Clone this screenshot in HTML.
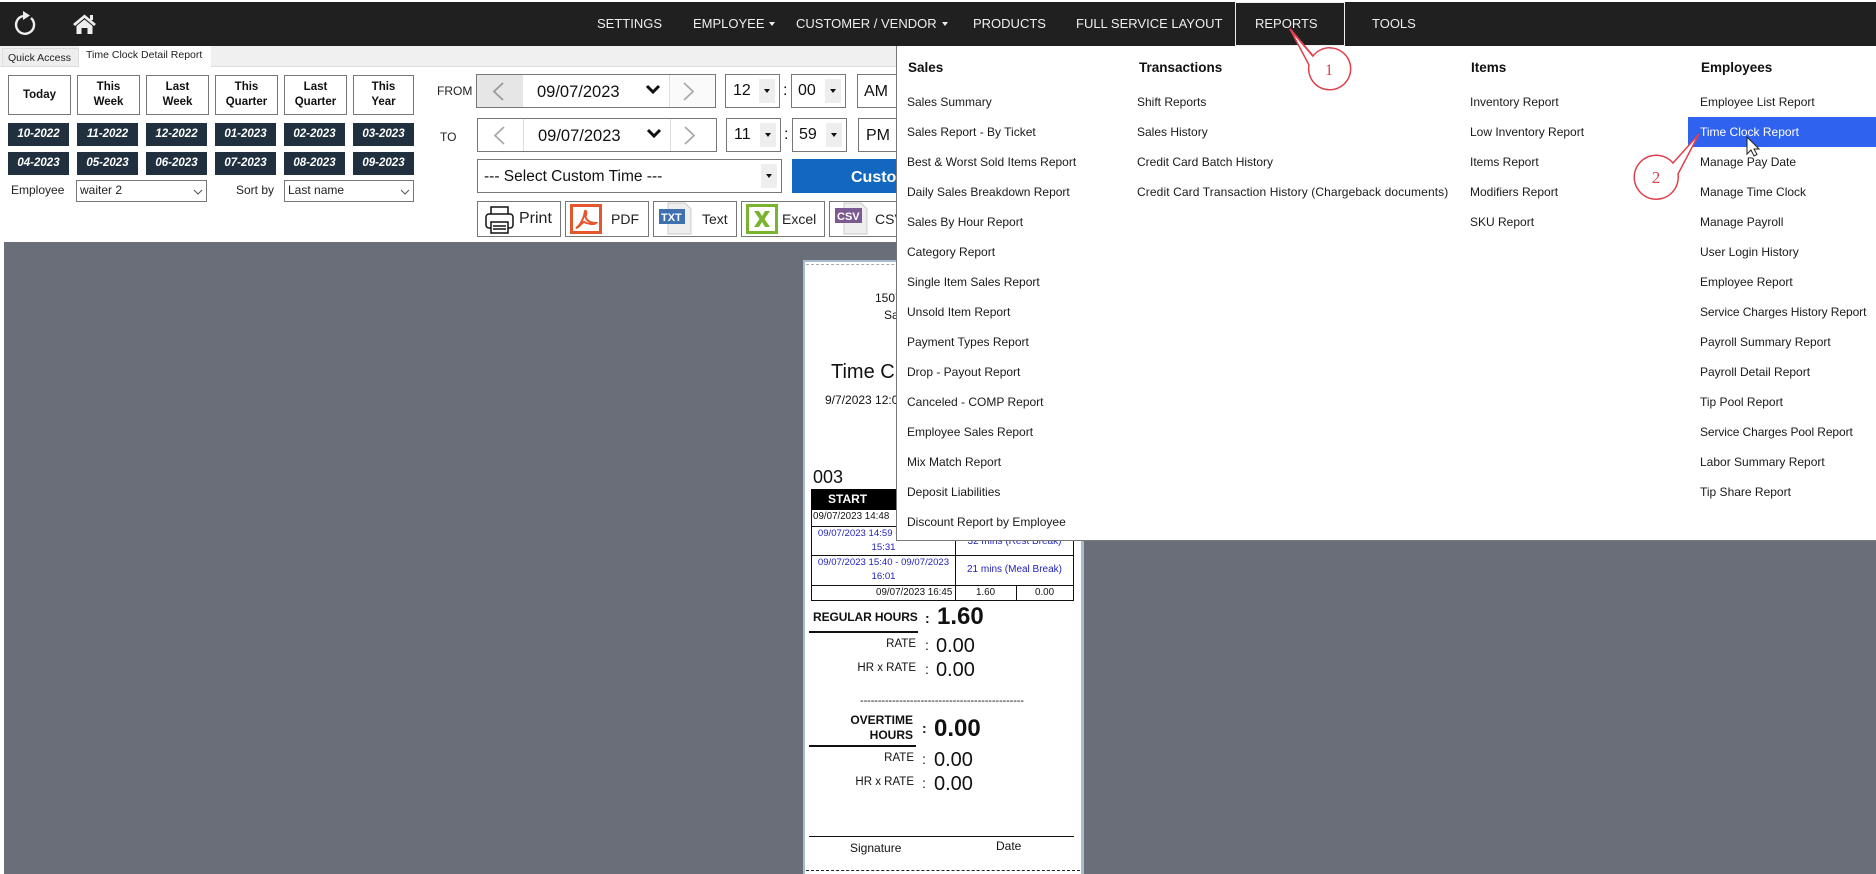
<!DOCTYPE html>
<html><head><meta charset="utf-8"><style>
html,body{margin:0;padding:0;width:1876px;height:874px;overflow:hidden;background:#fff;font-family:"Liberation Sans",sans-serif;color:#111}
div,span{position:absolute;white-space:nowrap;box-sizing:border-box}
.n{color:#eee;font-size:13px;top:16px}
.b{border:1px solid #777;background:#fff;top:75px;width:63px;height:40px;font-weight:bold;font-size:11.5px;text-align:center;line-height:15px;padding-top:4px;color:#111}
.m{background:#20303f;color:#fff;font:italic bold 11.5px/23px "Liberation Sans",sans-serif;width:61px;height:23px;text-align:center}
.box{border:1px solid #777;background:#fff}
.t{font-size:16px;color:#111}
.d{font-size:16.500px;color:#111}
.ar{background:#eee;width:16px;height:24px}
.ar:after{content:"";position:absolute;left:5px;top:10px;border:3px solid transparent;border-top:4px solid #111}
.a{border:1px solid #777;background:#fff;top:201px;height:36px}
.h{font-weight:bold;font-size:13.5px;top:60px;color:#111}
.i{font-size:12px;color:#1a1a1a;line-height:16px}
.r{font-size:12px;color:#111}
.l{font-size:11.500px;color:#111;text-align:right}
.blue{color:#2222bb;font-size:9.600px;text-align:center;line-height:14px}
.tb{font-size:9.800px;color:#111}
</style></head><body>
<div style="left:0;top:2px;width:1876px;height:44px;background:#202020"></div>
<svg style="position:absolute;left:0;top:0" width="110" height="46" viewBox="0 0 110 46"><path d="M31 18A9 9 0 1 1 23 16" fill="none" stroke="#eee" stroke-width="2.400"/><path d="M23 11L30 15.500L23 20Z" fill="#eee"/><path d="M73 24L84.500 14.500L96 24L94 26L84.500 18L75 26Z" fill="#eee"/><path d="M76.500 26L84.500 19.500L92.500 26V34H87.500V28H81.500V34H76.500Z" fill="#eee"/><rect x="90" y="15" width="3" height="5" fill="#eee"/></svg>
<div class="n" style="left:597px">SETTINGS</div>
<div class="n" style="left:693px">EMPLOYEE</div><div style="left:769px;top:22px;border:3px solid transparent;border-top:4px solid #eee"></div>
<div class="n" style="left:796px">CUSTOMER / VENDOR</div><div style="left:942px;top:22px;border:3px solid transparent;border-top:4px solid #eee"></div>
<div class="n" style="left:973px">PRODUCTS</div>
<div class="n" style="left:1076px">FULL SERVICE LAYOUT</div>
<div style="left:1235px;top:2px;width:110px;height:44px;border:1px solid #eee"></div>
<div class="n" style="left:1255px">REPORTS</div>
<div class="n" style="left:1372px">TOOLS</div>

<div style="left:0;top:46px;width:1876px;height:21px;background:#f0f0f0;border-bottom:1px solid #ddd"></div>
<div style="left:2px;top:48px;width:77px;height:19px;background:#eee;border:1px solid #ddd;font-size:10.500px;line-height:19px;padding-left:5px;color:#222">Quick Access</div>
<div style="left:79px;top:46px;width:132px;height:21px;background:#fff;font-size:10.500px;line-height:19px;padding-left:7px;color:#222">Time Clock Detail Report</div>

<div class="b" style="left:8px;padding-top:12px">Today</div>
<div class="b" style="left:77px">This<br>Week</div>
<div class="b" style="left:146px">Last<br>Week</div>
<div class="b" style="left:215px">This<br>Quarter</div>
<div class="b" style="left:284px">Last<br>Quarter</div>
<div class="b" style="left:353px;width:61px">This<br>Year</div>
<div class="m" style="left:8px;top:123px">10-2022</div><div class="m" style="left:77px;top:123px">11-2022</div><div class="m" style="left:146px;top:123px">12-2022</div><div class="m" style="left:215px;top:123px">01-2023</div><div class="m" style="left:284px;top:123px">02-2023</div><div class="m" style="left:353px;top:123px">03-2023</div>
<div class="m" style="left:8px;top:152px">04-2023</div><div class="m" style="left:77px;top:152px">05-2023</div><div class="m" style="left:146px;top:152px">06-2023</div><div class="m" style="left:215px;top:152px">07-2023</div><div class="m" style="left:284px;top:152px">08-2023</div><div class="m" style="left:353px;top:152px">09-2023</div>
<div style="left:11px;top:183px;font-size:12px;color:#222">Employee</div>
<div class="box" style="left:76px;top:180px;width:131px;height:22px;font-size:12px;padding:2px 3px;color:#222">waiter 2</div>
<div style="left:236px;top:183px;font-size:12px;color:#222">Sort by</div>
<div class="box" style="left:284px;top:180px;width:130px;height:22px;font-size:12px;padding:2px 3px;color:#222">Last name</div>
<svg style="position:absolute;left:190px;top:187px" width="225" height="10"><path d="M4 3L8 7L12 3M211 3L215 7L219 3" fill="none" stroke="#555"/></svg>

<div style="left:437px;top:84px;font-size:12px;color:#222">FROM</div>
<div style="left:440px;top:130px;font-size:12px;color:#222">TO</div>
<div class="box" style="left:476px;top:74px;width:240px;height:34px"></div>
<div style="left:477px;top:75px;width:46px;height:32px;background:#e6e6e6"></div>
<div style="left:669px;top:75px;width:46px;height:32px;border-left:1px solid #ddd;background:#fafafa"></div>
<div class="box" style="left:477px;top:118px;width:240px;height:34px"></div>
<div style="left:523px;top:119px;width:1px;height:32px;background:#ddd"></div>
<div style="left:670px;top:119px;width:1px;height:32px;background:#ddd"></div>
<div class="d" style="left:537px;top:83px">09/07/2023</div>
<div class="d" style="left:538px;top:127px">09/07/2023</div>
<svg style="position:absolute;left:480px;top:70px" width="300" height="90"><g fill="none" stroke="#999" stroke-width="1.800"><path d="M23 13L14 21.500L23 30"/><path d="M24 57L15 65.500L24 74" stroke="#aaa"/><path d="M204 13L213 21.500L204 30" stroke="#aaa"/><path d="M205 57L214 65.500L205 74" stroke="#aaa"/></g><g fill="none" stroke="#111" stroke-width="3"><path d="M167 16L173 22L179 16"/><path d="M168 60L174 66L180 60"/></g></svg>

<div class="box" style="left:725px;top:74px;width:55px;height:34px"></div><div class="t" style="left:733px;top:82px">12</div><div class="ar" style="left:759px;top:79px"></div>
<div style="left:783px;top:82px;font-size:16px">:</div>
<div class="box" style="left:791px;top:74px;width:55px;height:34px"></div><div class="t" style="left:798px;top:82px">00</div><div class="ar" style="left:825px;top:79px"></div>
<div class="box" style="left:857px;top:74px;width:60px;height:34px"></div><div class="t" style="left:864px;top:83px">AM</div>
<div class="box" style="left:726px;top:118px;width:55px;height:34px"></div><div class="t" style="left:734px;top:126px">11</div><div class="ar" style="left:760px;top:123px"></div>
<div style="left:784px;top:126px;font-size:16px">:</div>
<div class="box" style="left:792px;top:118px;width:55px;height:34px"></div><div class="t" style="left:799px;top:126px">59</div><div class="ar" style="left:826px;top:123px"></div>
<div class="box" style="left:858px;top:118px;width:60px;height:34px"></div><div class="t" style="left:866px;top:127px">PM</div>
<div class="box" style="left:477px;top:159px;width:305px;height:34px"></div>
<div style="left:484px;top:168px;font-size:15.500px;color:#111">--- Select Custom Time ---</div>
<div class="ar" style="left:761px;top:164px"></div>
<div style="left:792px;top:159px;width:120px;height:34px;background:#1268bf;color:#fff;font-weight:bold;font-size:16px;line-height:37px;padding-left:59px">Custom</div>

<div class="a" style="left:477px;width:84px"></div><div style="left:519px;top:210px;font-size:16px;color:#222">Print</div>
<svg style="position:absolute;left:484px;top:205px" width="32" height="30"><g fill="none" stroke="#111" stroke-width="1.500"><path d="M7 9V2H24V9"/><rect x="2" y="9" width="27" height="14" rx="3"/><rect x="7" y="17" width="17" height="11" fill="#fff"/><path d="M9 21H22M9 24H22"/></g></svg>
<div class="a" style="left:565px;width:84px"></div><div style="left:611px;top:211px;font-size:14px;color:#222">PDF</div>
<svg style="position:absolute;left:570px;top:204px" width="33" height="31"><rect x="1.500" y="1.500" width="29" height="27" fill="#fff" stroke="#e4572e" stroke-width="3"/><path d="M6 24C10 22 14 14 15 7C16 6 17 8 15.500 13C17 17 20 19 26 19C24 21 18 20 14 18C11 19 9 24 6 24Z" fill="none" stroke="#e4572e" stroke-width="2"/></svg>
<div class="a" style="left:653px;width:84px"></div><div style="left:702px;top:211px;font-size:14px;color:#222">Text</div>
<svg style="position:absolute;left:658px;top:202px" width="38" height="33"><path d="M10 1H27L33 7V32H10Z" fill="#eee" stroke="#ccc"/><rect x="1" y="7" width="26" height="15" fill="#3f70b0"/><text x="3" y="19" font-family="Liberation Sans" font-weight="bold" font-size="11" fill="#fff">TXT</text></svg>
<div class="a" style="left:741px;width:84px"></div><div style="left:782px;top:211px;font-size:14px;color:#222">Excel</div>
<svg style="position:absolute;left:746px;top:204px" width="34" height="31"><rect x="1.500" y="1.500" width="29" height="27" fill="#fff" stroke="#7ab32e" stroke-width="3"/><path d="M8 7H13L16 12L19 7H24L18.500 15L24 23H19L16 18L13 23H8L13.500 15Z" fill="#7ab32e"/></svg>
<div class="a" style="left:829px;width:84px"></div><div style="left:875px;top:211px;font-size:14px;color:#222">CSV</div>
<svg style="position:absolute;left:834px;top:202px" width="38" height="33"><path d="M10 1H27L33 7V32H10Z" fill="#eee" stroke="#ccc"/><rect x="1" y="6" width="27" height="15" fill="#7b5a92"/><text x="3" y="18" font-family="Liberation Sans" font-weight="bold" font-size="11" fill="#fff">CSV</text></svg>

<div style="left:4px;top:242px;width:1872px;height:632px;background:#696e79"></div>
<div style="left:803px;top:260px;width:281px;height:614px;background:#fff;border-left:2px solid #a9bccd;border-right:3px solid #a9bccd;border-top:2px solid #a9bccd"></div>
<div style="left:806px;top:264px;width:274px;border-top:1px dashed #aaa"></div>
<div style="left:806px;top:870px;width:274px;border-top:1px dashed #222"></div>
<div class="r" style="left:875px;top:291px">1507</div>
<div class="r" style="left:884px;top:308px">Sa</div>
<div style="left:831px;top:361px;font-size:20px;color:#111">Time Cl</div>
<div class="r" style="left:825px;top:393px">9/7/2023 12:00</div>
<div style="left:813px;top:467px;font-size:18px;color:#111">003</div>
<div style="left:811px;top:489px;width:262px;height:21px;background:#000;color:#fff;font-weight:bold;font-size:12px;line-height:20px;padding-left:17px">START</div>
<div style="left:811px;top:510px;width:263px;height:91px;border:1px solid #111;border-top:none"></div>
<div style="left:811px;top:526px;width:263px;height:1px;background:#111"></div>
<div style="left:811px;top:555px;width:263px;height:1px;background:#111"></div>
<div style="left:811px;top:585px;width:263px;height:1px;background:#111"></div>
<div style="left:955px;top:526px;width:1px;height:75px;background:#111"></div>
<div style="left:1016px;top:585px;width:1px;height:16px;background:#111"></div>
<div class="tb" style="left:813px;top:511px">09/07/2023 14:48</div>
<div class="blue" style="left:812px;top:527px;width:143px">09/07/2023 14:59 - 09/07/2023<br>15:31</div>
<div class="blue" style="left:956px;top:535px;width:117px;font-size:10px">32 mins (Rest Break)</div>
<div class="blue" style="left:812px;top:556px;width:143px">09/07/2023 15:40 - 09/07/2023<br>16:01</div>
<div class="blue" style="left:956px;top:563px;width:117px;font-size:10px">21 mins (Meal Break)</div>
<div class="tb" style="left:876px;top:587px">09/07/2023 16:45</div>
<div class="tb" style="left:976px;top:587px">1.60</div>
<div class="tb" style="left:1035px;top:587px">0.00</div>

<div style="left:813px;top:610px;font-size:12px;font-weight:bold;letter-spacing:-.1px">REGULAR HOURS</div>
<div style="left:925px;top:610px;font-size:14px;font-weight:bold">:</div>
<div style="left:937px;top:603px;font-size:24px;font-weight:bold">1.60</div>
<div style="left:809px;top:631px;width:109px;height:2px;background:#111"></div>
<div class="l" style="left:850px;width:66px;top:638px">RATE</div><div style="left:925px;top:637px;font-size:14px">:</div><div style="left:936px;top:635px;font-size:20px">0.00</div>
<div class="l" style="left:850px;width:66px;top:662px">HR x RATE</div><div style="left:925px;top:661px;font-size:14px">:</div><div style="left:936px;top:659px;font-size:20px">0.00</div>
<div style="left:860px;top:695px;font-size:11px;letter-spacing:-.1px">----------------------------------------------</div>
<div style="left:850px;top:713px;font-size:12px;font-weight:bold;text-align:right;width:63px;line-height:15px">OVERTIME<br>HOURS</div>
<div style="left:922px;top:720px;font-size:14px;font-weight:bold">:</div>
<div style="left:934px;top:715px;font-size:24px;font-weight:bold">0.00</div>
<div style="left:809px;top:745px;width:107px;height:2px;background:#111"></div>
<div class="l" style="left:848px;width:66px;top:752px">RATE</div><div style="left:922px;top:751px;font-size:14px">:</div><div style="left:934px;top:749px;font-size:20px">0.00</div>
<div class="l" style="left:848px;width:66px;top:776px">HR x RATE</div><div style="left:922px;top:775px;font-size:14px">:</div><div style="left:934px;top:773px;font-size:20px">0.00</div>
<div style="left:809px;top:836px;width:265px;height:1px;background:#111"></div>
<div class="r" style="left:850px;top:841px">Signature</div>
<div class="r" style="left:996px;top:839px">Date</div>

<div style="left:896px;top:46px;width:980px;height:495px;background:#fff;border-left:1px solid #777;border-bottom:1px solid #777"></div>
<div class="h" style="left:908px">Sales</div><div class="h" style="left:1139px">Transactions</div><div class="h" style="left:1471px">Items</div><div class="h" style="left:1701px">Employees</div>
<div style="left:1688px;top:117px;width:188px;height:30px;background:#2f62ee"></div>

<div class="i" style="left:907px;top:94px">Sales Summary</div>
<div class="i" style="left:907px;top:124px">Sales Report - By Ticket</div>
<div class="i" style="left:907px;top:154px">Best &amp; Worst Sold Items Report</div>
<div class="i" style="left:907px;top:184px">Daily Sales Breakdown Report</div>
<div class="i" style="left:907px;top:214px">Sales By Hour Report</div>
<div class="i" style="left:907px;top:244px">Category Report</div>
<div class="i" style="left:907px;top:274px">Single Item Sales Report</div>
<div class="i" style="left:907px;top:304px">Unsold Item Report</div>
<div class="i" style="left:907px;top:334px">Payment Types Report</div>
<div class="i" style="left:907px;top:364px">Drop - Payout Report</div>
<div class="i" style="left:907px;top:394px">Canceled - COMP Report</div>
<div class="i" style="left:907px;top:424px">Employee Sales Report</div>
<div class="i" style="left:907px;top:454px">Mix Match Report</div>
<div class="i" style="left:907px;top:484px">Deposit Liabilities</div>
<div class="i" style="left:907px;top:514px">Discount Report by Employee</div>

<div class="i" style="left:1137px;top:94px">Shift Reports</div>
<div class="i" style="left:1137px;top:124px">Sales History</div>
<div class="i" style="left:1137px;top:154px">Credit Card Batch History</div>
<div class="i" style="left:1137px;top:184px;letter-spacing:.11px">Credit Card Transaction History (Chargeback documents)</div>

<div class="i" style="left:1470px;top:94px">Inventory Report</div>
<div class="i" style="left:1470px;top:124px">Low Inventory Report</div>
<div class="i" style="left:1470px;top:154px">Items Report</div>
<div class="i" style="left:1470px;top:184px">Modifiers Report</div>
<div class="i" style="left:1470px;top:214px">SKU Report</div>

<div class="i" style="left:1700px;top:94px">Employee List Report</div>
<div class="i" style="left:1700px;top:124px;color:#fff">Time Clock Report</div>
<div class="i" style="left:1700px;top:154px">Manage Pay Date</div>
<div class="i" style="left:1700px;top:184px">Manage Time Clock</div>
<div class="i" style="left:1700px;top:214px">Manage Payroll</div>
<div class="i" style="left:1700px;top:244px">User Login History</div>
<div class="i" style="left:1700px;top:274px">Employee Report</div>
<div class="i" style="left:1700px;top:304px;letter-spacing:-.08px">Service Charges History Report</div>
<div class="i" style="left:1700px;top:334px">Payroll Summary Report</div>
<div class="i" style="left:1700px;top:364px">Payroll Detail Report</div>
<div class="i" style="left:1700px;top:394px">Tip Pool Report</div>
<div class="i" style="left:1700px;top:424px;letter-spacing:-.1px">Service Charges Pool Report</div>
<div class="i" style="left:1700px;top:454px">Labor Summary Report</div>
<div class="i" style="left:1700px;top:484px">Tip Share Report</div>

<svg style="position:absolute;left:0;top:0" width="1876" height="874" viewBox="0 0 1876 874">
<path d="M1290 29L1313 56A21 21 0 1 1 1309 65L1290 29Z" fill="#fff" stroke="#e0404e" stroke-width="1.500"/>
<path d="M1290 29L1313 56" stroke="#e0404e" stroke-width="1.800"/>
<text x="1329" y="75" font-family="Liberation Serif" font-size="16" fill="#d9434e" text-anchor="middle">1</text>
<path d="M1699 134L1673 163A22 22 0 1 0 1678 174Z" fill="#fff" stroke="#e0404e" stroke-width="1.500"/>
<text x="1656" y="183" font-family="Liberation Serif" font-size="17" fill="#d9434e" text-anchor="middle">2</text>
<path d="M1747 137V154L1751 150L1754 156L1757 154.500L1754 149H1759Z" fill="#fff" stroke="#222" stroke-width="1"/>
</svg>
</body></html>
